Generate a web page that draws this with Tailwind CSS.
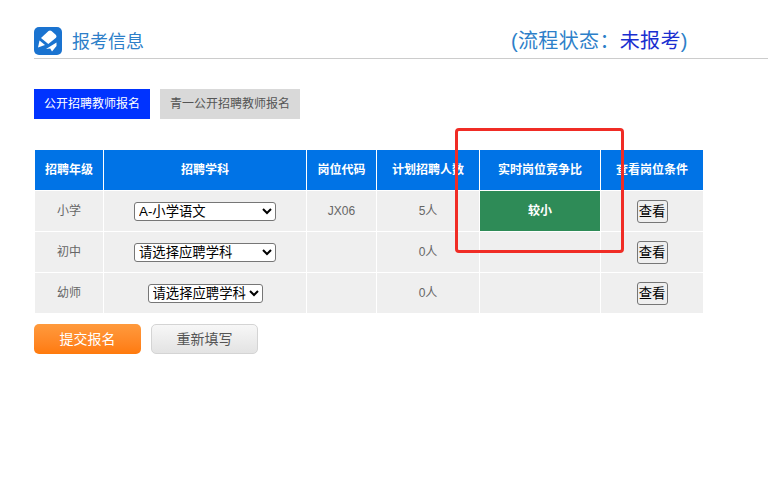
<!DOCTYPE html>
<html lang="zh">
<head>
<meta charset="utf-8">
<script src="https://cdn.jsdelivr.net/npm/@tailwindcss/browser@4"></script>
</head>
<body class="bg-white">
<div class="relative w-[768px] h-[493px] overflow-hidden bg-white font-['Liberation_Sans','Noto_Sans_CJK_SC',sans-serif]">
  <div class="ml-[34px] pt-[27px] h-[59px] border-b border-[#cccccc] flex items-start">
    <svg class="w-7 h-7 shrink-0" viewBox="0 0 28 28">
      <rect width="28" height="28" rx="5" fill="#1a73d0"/>
      <path d="M7 11 L14.5 4 Q16 3 17.5 4 L22 8 Q23 9.5 22 10.8 L14.3 17 Z" fill="#ffffff"/>
      <path d="M5.5 13.5 L11 18 L4 20.5 Z" fill="#ffffff"/>
      <path d="M12 22 L22.5 15.5 L22.5 19 L18 24.5 L16.2 21.5 Z" fill="#ffffff"/>
    </svg>
    <div class="ml-[10px] mt-[3px] w-[439px] text-[18px] leading-6 text-[#2d7fc9]">报考信息</div>
    <div class="mt-[2px] text-[20px] leading-6 text-[#2d7fc9] whitespace-nowrap tracking-[0.35px]">(流程状态：<span class="text-[#1a2fd0]">未报考</span>)</div>
  </div>
  <div class="ml-[34px] mt-[30px] flex gap-[10px] text-[12px] leading-[30px]">
    <div class="w-[116px] h-[30px] bg-[#0033ff] text-white text-center whitespace-nowrap">公开招聘教师报名</div>
    <div class="w-[140px] h-[30px] bg-[#d9d9d9] text-[#555555] text-center whitespace-nowrap">青一公开招聘教师报名</div>
  </div>
  <div class="ml-[35px] mt-[31px] w-[668px] grid grid-cols-[68px_202px_69px_102px_120px_102px] grid-rows-[40px_40px_40px_40px] gap-px text-[12px] text-[#666666] text-center bg-white">
    <div class="bg-[#0073e6] text-white font-bold flex items-center justify-center">招聘年级</div>
    <div class="bg-[#0073e6] text-white font-bold flex items-center justify-center">招聘学科</div>
    <div class="bg-[#0073e6] text-white font-bold flex items-center justify-center">岗位代码</div>
    <div class="bg-[#0073e6] text-white font-bold flex items-center justify-center">计划招聘人数</div>
    <div class="bg-[#0073e6] text-white font-bold flex items-center justify-center">实时岗位竞争比</div>
    <div class="bg-[#0073e6] text-white font-bold flex items-center justify-center">查看岗位条件</div>

    <div class="bg-[#efefef] flex items-center justify-center">小学</div>
    <div class="bg-[#efefef] flex items-center justify-center">
      <select class="w-[142px] h-[19px] bg-white border border-[#767676] rounded-[3px] text-[13.33px] text-black appearance-auto"><option>A-小学语文</option></select>
    </div>
    <div class="bg-[#efefef] flex items-center justify-center">JX06</div>
    <div class="bg-[#efefef] flex items-center justify-center">5人</div>
    <div class="bg-[#2e8b57] text-white font-bold flex items-center justify-center">较小</div>
    <div class="bg-[#efefef] flex items-center justify-center"><button class="w-[31px] h-[23px] mt-px bg-[#efefef] border border-[#767676] rounded-[3px] text-[13.33px] text-black">查看</button></div>

    <div class="bg-[#efefef] flex items-center justify-center">初中</div>
    <div class="bg-[#efefef] flex items-center justify-center">
      <select class="w-[142px] h-[19px] bg-white border border-[#767676] rounded-[3px] text-[13.33px] text-black appearance-auto"><option>请选择应聘学科</option></select>
    </div>
    <div class="bg-[#efefef]"></div>
    <div class="bg-[#efefef] flex items-center justify-center">0人</div>
    <div class="bg-[#efefef]"></div>
    <div class="bg-[#efefef] flex items-center justify-center"><button class="w-[31px] h-[23px] mt-px bg-[#efefef] border border-[#767676] rounded-[3px] text-[13.33px] text-black">查看</button></div>

    <div class="bg-[#efefef] flex items-center justify-center">幼师</div>
    <div class="bg-[#efefef] flex items-center justify-center">
      <select class="w-[115px] h-[19px] bg-white border border-[#767676] rounded-[3px] text-[13.33px] text-black appearance-auto"><option>请选择应聘学科</option></select>
    </div>
    <div class="bg-[#efefef]"></div>
    <div class="bg-[#efefef] flex items-center justify-center">0人</div>
    <div class="bg-[#efefef]"></div>
    <div class="bg-[#efefef] flex items-center justify-center"><button class="w-[31px] h-[23px] mt-px bg-[#efefef] border border-[#767676] rounded-[3px] text-[13.33px] text-black">查看</button></div>
  </div>
  <div class="ml-[34px] mt-[11px] flex gap-[10px] text-[14px]">
    <div class="w-[107px] h-[30px] rounded-[5px] bg-gradient-to-b from-[#ff9a3c] to-[#ff7a0a] text-white flex items-center justify-center">提交报名</div>
    <div class="w-[107px] h-[30px] rounded-[5px] border border-[#d4d4d4] bg-gradient-to-b from-[#f7f7f7] to-[#e3e3e3] text-[#555555] flex items-center justify-center">重新填写</div>
  </div>
  <div class="absolute left-[455px] top-[128px] w-[169px] h-[125px] border-[3px] border-[#f02c25] rounded-[4px]"></div>
</div>
</body>
</html>
